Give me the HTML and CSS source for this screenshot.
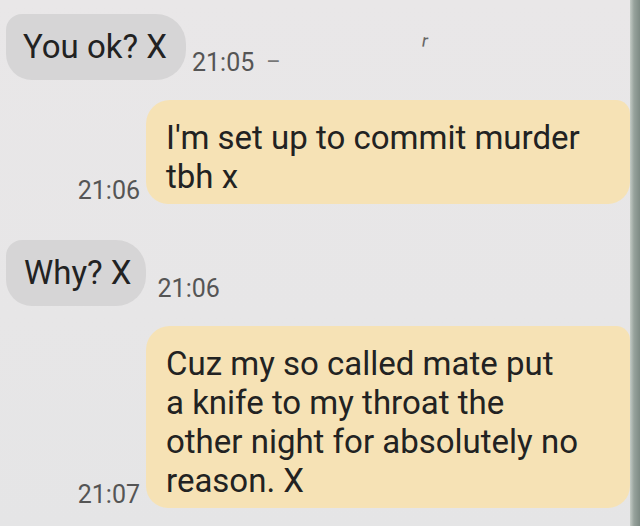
FILE: index.html
```html
<!DOCTYPE html>
<html>
<head>
<meta charset="utf-8">
<link rel="stylesheet" href="styles.css">
</head>
<body>
<div class="screen">
  <div class="thread">
    <div class="row in first">
      <div class="bubble gray">You ok? X</div>
      <div class="time">21:05</div>
      <div class="dash">–</div>
      <div class="speck">r</div>
    </div>
    <div class="row out second">
      <div class="time">21:06</div>
      <div class="bubble yellow">I'm set up to commit murder<br>tbh x</div>
    </div>
    <div class="row in third">
      <div class="bubble gray">Why? X</div>
      <div class="time">21:06</div>
    </div>
    <div class="row out fourth">
      <div class="time">21:07</div>
      <div class="bubble yellow">Cuz my so called mate put<br>a knife to my throat the<br>other night for absolutely no<br>reason. X</div>
    </div>
  </div>
  <div class="edge"></div>
</div>
</body>
</html>
```

FILE: styles.css
```css
html, body {
  margin: 0;
  padding: 0;
  width: 640px;
  height: 526px;
  overflow: hidden;
}
body {
  background: #e8e6e7;
  font-family: Roboto, "Noto Sans", sans-serif;
  color: #222222;
}
.screen {
  display: flex;
  height: 526px;
}
.thread {
  flex: 1;
  display: flex;
  flex-direction: column;
  background: linear-gradient(180deg, #e9e7e8 0%, #e7e6e7 60%, #e5e5e6 100%);
}
.edge {
  width: 10px;
  background: linear-gradient(90deg, #c4cbc6 0%, #97a29c 40%, #7d8a84 100%);
}
.row {
  display: flex;
  align-items: flex-end;
  position: relative;
}
.row.in {
  padding-left: 6px;
}
.row.out {
  justify-content: flex-end;
}
.bubble {
  font-size: 33px;
}
.gray {
  background: #d6d5d6;
  line-height: 36px;
  padding: 15px 19px 15px 17px;
  border-radius: 16px 30px 30px 26px;
}
.third .gray {
  padding-left: 18px;
  padding-right: 14px;
}
.yellow {
  background: #f6e2b5;
  line-height: 39px;
  width: 444px;
  padding: 18px 20px 8px 20px;
  border-radius: 24px 14px 22px 22px;
}
.time {
  font-size: 25px;
  color: #555555;
  line-height: 28px;
}
.in .time {
  margin-left: 6px;
  margin-bottom: 3px;
}
.third .time {
  margin-left: 12px;
}
.out .time {
  margin-right: 6px;
  margin-bottom: -1px;
}
.dash {
  font-size: 22px;
  color: #777;
  margin-left: 12px;
  margin-bottom: 6px;
}
.speck {
  position: absolute;
  left: 422px;
  top: 16px;
  font-size: 18px;
  color: #666;
  transform: rotate(10deg);
}
.first { margin-top: 14px; }
.second { margin-top: 20px; }
.third { margin-top: 36px; }
.fourth { margin-top: 20px; }
```
